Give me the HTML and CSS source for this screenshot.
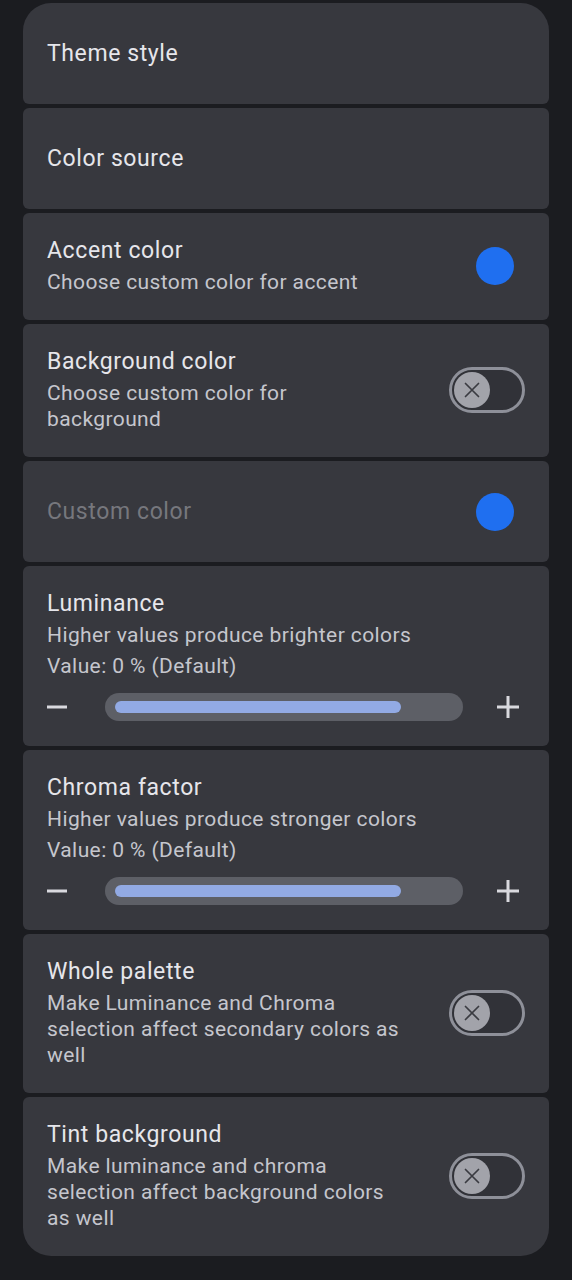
FILE: index.html
```html
<!DOCTYPE html>
<html lang="en">
<head>
<meta charset="utf-8">
<title>Theme settings</title>
<link rel="stylesheet" href="styles.css">
</head>
<body>
<main class="list">
  <section class="card card-first single">
    <div class="text"><div class="title">Theme style</div></div>
  </section>
  <section class="card single">
    <div class="text"><div class="title">Color source</div></div>
  </section>
  <section class="card row">
    <div class="text">
      <div class="title">Accent color</div>
      <div class="sub">Choose custom color for accent</div>
    </div>
    <div class="widget"><span class="dot"></span></div>
  </section>
  <section class="card row">
    <div class="text">
      <div class="title">Background color</div>
      <div class="sub">Choose custom color for background</div>
    </div>
    <div class="widget"><span class="switch"><span class="thumb"><svg viewBox="0 0 16 16" width="16" height="16"><path d="M1.5 1.5 14.5 14.5M14.5 1.5 1.5 14.5" stroke="#3a3b41" stroke-width="1.7" fill="none" stroke-linecap="round"/></svg></span></span></div>
  </section>
  <section class="card single row">
    <div class="text"><div class="title disabled">Custom color</div></div>
    <div class="widget"><span class="dot"></span></div>
  </section>
  <section class="card">
    <div class="text">
      <div class="title">Luminance</div>
      <div class="sub">Higher values produce brighter colors</div>
      <div class="sub value">Value: 0 % (Default)</div>
    </div>
    <div class="slider">
      <svg class="icon" viewBox="0 0 22 22" width="22" height="22"><path d="M0 11H20" stroke="#d9d9de" stroke-width="3"/></svg>
      <div class="track"><div class="fill" style="width: 286px"></div></div>
      <svg class="icon" viewBox="0 0 22 22" width="22" height="22"><path d="M0 11H22M11 0V22" stroke="#d9d9de" stroke-width="3"/></svg>
    </div>
  </section>
  <section class="card">
    <div class="text">
      <div class="title">Chroma factor</div>
      <div class="sub">Higher values produce stronger colors</div>
      <div class="sub value">Value: 0 % (Default)</div>
    </div>
    <div class="slider">
      <svg class="icon" viewBox="0 0 22 22" width="22" height="22"><path d="M0 11H20" stroke="#d9d9de" stroke-width="3"/></svg>
      <div class="track"><div class="fill" style="width: 286px"></div></div>
      <svg class="icon" viewBox="0 0 22 22" width="22" height="22"><path d="M0 11H22M11 0V22" stroke="#d9d9de" stroke-width="3"/></svg>
    </div>
  </section>
  <section class="card row">
    <div class="text">
      <div class="title">Whole palette</div>
      <div class="sub">Make Luminance and Chroma selection affect secondary colors as well</div>
    </div>
    <div class="widget"><span class="switch"><span class="thumb"><svg viewBox="0 0 16 16" width="16" height="16"><path d="M1.5 1.5 14.5 14.5M14.5 1.5 1.5 14.5" stroke="#3a3b41" stroke-width="1.7" fill="none" stroke-linecap="round"/></svg></span></span></div>
  </section>
  <section class="card card-last row">
    <div class="text">
      <div class="title">Tint background</div>
      <div class="sub">Make luminance and chroma selection affect background colors as well</div>
    </div>
    <div class="widget"><span class="switch"><span class="thumb"><svg viewBox="0 0 16 16" width="16" height="16"><path d="M1.5 1.5 14.5 14.5M14.5 1.5 1.5 14.5" stroke="#3a3b41" stroke-width="1.7" fill="none" stroke-linecap="round"/></svg></span></span></div>
  </section>
</main>
</body>
</html>
```
FILE: styles.css
```css
html, body {
  margin: 0;
  padding: 0;
  background: #1b1c20;
}
body {
  font-family: Roboto, "Noto Sans", "Liberation Sans", sans-serif;
  width: 572px;
  height: 1280px;
  overflow: hidden;
}
.list {
  display: flex;
  flex-direction: column;
  gap: 4px;
  padding: 3px 23px 0 23px;
}
.card {
  background: #37383e;
  border-radius: 6px;
  padding: 23px 24px 25px 24px;
  box-sizing: border-box;
}
.card-first {
  border-radius: 28px 28px 6px 6px;
}
.card-last {
  border-radius: 6px 6px 28px 28px;
}
.single {
  min-height: 101px;
  display: flex;
  align-items: center;
  padding-top: 0;
  padding-bottom: 0;
}
.row {
  display: flex;
  align-items: center;
}
.text {
  flex: 1;
  min-width: 0;
}
.row .text {
  padding-right: 46px;
}
.title {
  font-size: 23px;
  line-height: 30px;
  color: #e6e6eb;
  font-weight: 400;
  letter-spacing: 0.6px;
  margin-bottom: 3px;
}
.single .title {
  margin-bottom: 0;
}
.title.disabled {
  color: #76777d;
}
.sub {
  font-size: 21px;
  line-height: 26px;
  color: #c5c6cd;
  letter-spacing: 0.4px;
}
.value {
  margin-top: 5px;
}
.widget {
  flex: none;
  display: flex;
  justify-content: flex-end;
  width: 76px;
}
.dot {
  width: 38px;
  height: 38px;
  border-radius: 50%;
  background: #1f6ff0;
  margin-right: 11px;
}
.switch {
  width: 76px;
  height: 46px;
  box-sizing: border-box;
  border: 3px solid #8e9099;
  border-radius: 23px;
  display: flex;
  align-items: center;
  padding-left: 2px;
  background: #313238;
}
.thumb {
  width: 36px;
  height: 36px;
  border-radius: 50%;
  background: #a2a3aa;
  display: flex;
  align-items: center;
  justify-content: center;
}
.slider {
  display: flex;
  align-items: center;
  height: 48px;
  margin-top: 4px;
  padding-right: 6px;
  margin-bottom: -10px;
}
.icon {
  flex: none;
  display: block;
}
.track {
  flex: 1;
  height: 28px;
  border-radius: 14px;
  background: #5d5f66;
  margin: 0 34px 0 36px;
  display: flex;
  align-items: center;
  padding-left: 10px;
}
.fill {
  height: 12px;
  border-radius: 6px;
  background: #92aae4;
}
```
